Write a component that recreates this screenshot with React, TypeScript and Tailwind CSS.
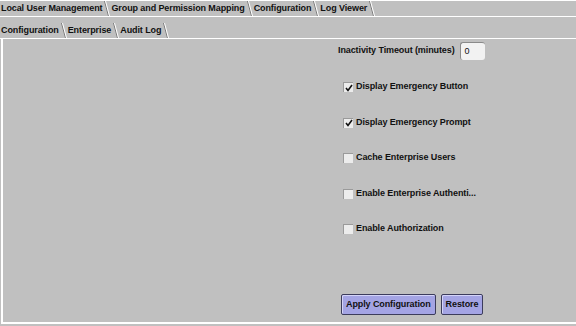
import React from 'react'

const mainTabs = ['Local User Management', 'Group and Permission Mapping', 'Configuration', 'Log Viewer']
const subTabs = ['Configuration', 'Enterprise', 'Audit Log']

const options = [
  { label: 'Display Emergency Button', checked: true },
  { label: 'Display Emergency Prompt', checked: true },
  { label: 'Cache Enterprise Users', checked: false },
  { label: 'Enable Enterprise Authenti...', checked: false },
  { label: 'Enable Authorization', checked: false },
]

function Slash() {
  return (
    <svg width="6" height="15" viewBox="0 0 6 15" className="shrink-0">
      <line x1="0.5" y1="0" x2="4.5" y2="15" stroke="#7a7a7a" strokeWidth="1" />
      <line x1="1.5" y1="0" x2="5.5" y2="15" stroke="#ffffff" strokeWidth="1" />
    </svg>
  )
}

function Tab({ label }: { label: string }) {
  return (
    <div className="flex items-center h-[15px]">
      <span className="pl-[1px] pr-[2px] leading-none">{label}</span>
      <Slash />
    </div>
  )
}

function Checkbox({ checked }: { checked: boolean }) {
  return (
    <div className="w-[10px] h-[10px] bg-[#ececec] border-t border-l border-[#9a9a9a] flex items-center justify-center">
      {checked && (
        <svg width="8" height="8" viewBox="0 0 8 8">
          <path d="M1 4 L3 6.5 L7 1" fill="none" stroke="#111" strokeWidth="1.6" />
        </svg>
      )}
    </div>
  )
}

export default function App() {
  return (
    <div className="w-[576px] h-[326px] bg-[#c0c0c0] text-[#111] text-[9px] font-bold tracking-[-0.1px] flex flex-col" style={{ fontFamily: '"Liberation Sans", Arial, sans-serif' }}>
      {/* Main tabs */}
      <div className="h-[17px] flex items-end border-t border-white border-b border-b-white">
        {mainTabs.map((t) => (
          <Tab key={t} label={t} />
        ))}
      </div>

      <div className="h-[6px]" />

      {/* Sub tabs */}
      <div className="h-[16px] flex items-end border-b border-white">
        {subTabs.map((t) => (
          <Tab key={t} label={t} />
        ))}
      </div>

      {/* Content */}
      <div className="flex-1 ml-[1px] border-l-2 border-white border-b-2 border-b-white mb-[2px] flex">
        <div className="flex-1" />
        <div className="w-[238px] flex flex-col pt-[3px] pb-[7px]">
          <div className="flex items-center h-[18px]">
            <span>Inactivity Timeout (minutes)</span>
            <div className="ml-[5px] w-[25px] h-[18px] rounded-[3px] bg-[#f2f2f2] border-t border-l border-[#8a8a8a] flex items-center pl-[4px] font-normal">
              0
            </div>
          </div>

          <div className="flex flex-col gap-[17.5px] mt-[18px] pl-[5px]">
            {options.map((o) => (
              <div key={o.label} className="flex items-center h-[18px] gap-[3px]">
                <Checkbox checked={o.checked} />
                <span>{o.label}</span>
              </div>
            ))}
          </div>

          <div className="mt-auto flex gap-[5px] pl-[3px]">
            <button className="h-[21px] px-[4px] rounded-[2px] bg-[#a4a4e4] border border-[#3c3c5c] shadow-[inset_1px_1px_0_#d4d4f8] text-[9px] font-bold">
              Apply Configuration
            </button>
            <button className="h-[21px] px-[4px] rounded-[2px] bg-[#a4a4e4] border border-[#3c3c5c] shadow-[inset_1px_1px_0_#d4d4f8] text-[9px] font-bold">
              Restore
            </button>
          </div>
        </div>
      </div>
    </div>
  )
}
